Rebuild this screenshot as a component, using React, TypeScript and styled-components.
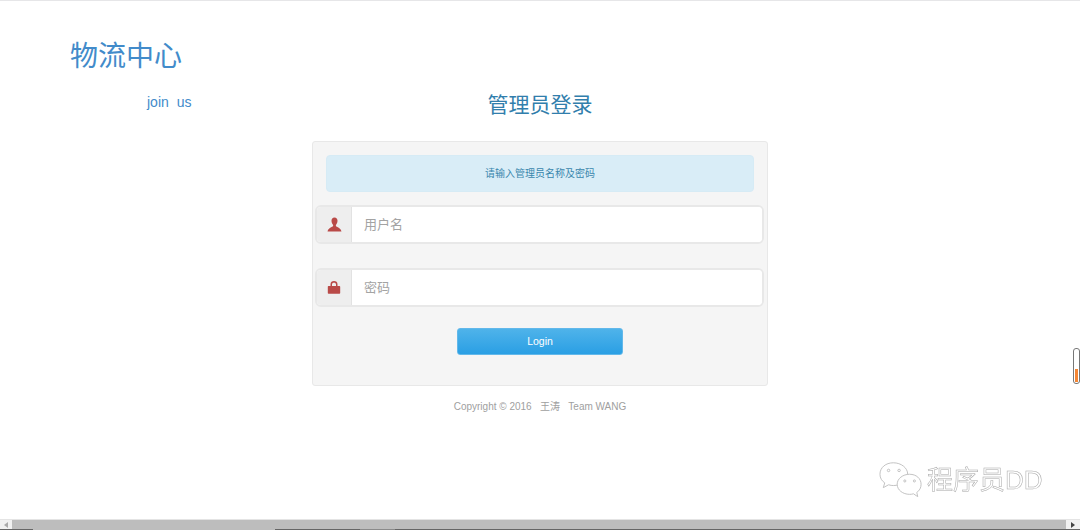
import React from "react";
import styled, { createGlobalStyle } from "styled-components";

const Global = createGlobalStyle`
  html, body { margin: 0; padding: 0; background: #fff; overflow: hidden; }
  body { font-family: "Liberation Sans", "Noto Sans CJK SC", sans-serif; }
  * { box-sizing: border-box; }
`;
const Page = styled.div`
  position: relative;
  width: 1080px;
  height: 530px;
  border-top: 1px solid #e6e6e8;
  overflow: hidden;
  display: flex;
  flex-direction: column;
`;
const Main = styled.main`
  flex: 1;
  display: flex;
  flex-direction: column;
`;
const Brand = styled.h1`
  margin: 38px 0 0 70px;
  font-size: 28px;
  line-height: 36px;
  font-weight: 400;
  color: #428bca;
`;
const TitleRow = styled.div`
  display: grid;
  grid-template-columns: 1fr auto 1fr;
  align-items: center;
  margin-top: 14px;
  height: 32px;
`;
const Join = styled.a`
  padding-left: 147px;
  font-size: 14px;
  color: #428bca;
  word-spacing: 4px;
  margin-top: -6px;
`;
const Title = styled.h2`
  margin: 0;
  font-size: 21px;
  line-height: 32px;
  font-weight: 400;
  color: #317eac;
`;
const Box = styled.form`
  width: 456px;
  height: 245px;
  margin: 20px auto 0;
  padding: 13px;
  background: #f5f5f5;
  border: 1px solid #e8e8e8;
  border-radius: 3px;
  display: flex;
  flex-direction: column;
`;
const Notice = styled.div`
  height: 37px;
  padding-bottom: 2px;
  display: flex;
  align-items: center;
  justify-content: center;
  background: #d9edf7;
  border: 1px solid #d6ebf5;
  border-radius: 4px;
  font-size: 10px;
  color: #3a87ad;
`;
const Field = styled.div<{ $gap: number }>`
  display: flex;
  height: 39px;
  margin: ${(p) => p.$gap}px -10px 0 -11px;
  border: 2px solid #e8e8e8;
  border-radius: 6px;
  background: #fff;
  overflow: hidden;
`;
const Addon = styled.span`
  width: 35px;
  flex: none;
  display: flex;
  align-items: center;
  justify-content: center;
  background: #eeeeee;
  border-right: 1px solid #e2e2e2;
`;
const Input = styled.input`
  flex: 1;
  min-width: 0;
  border: 0;
  outline: 0;
  background: #fff;
  padding: 0 12px;
  font: 13px "Liberation Sans", "Noto Sans CJK SC", sans-serif;
  &::placeholder { color: #a3a3a3; opacity: 1; }
`;
const Button = styled.button`
  display: block;
  width: 166px;
  height: 27px;
  margin: 21px auto 0;
  padding: 0 0 2px;
  border: 1px solid #62b8ea;
  border-radius: 3px;
  background: linear-gradient(#4fb3ea, #2a9fe4);
  color: #fff;
  font: 10.5px "Liberation Sans", sans-serif;
`;
const Footer = styled.p`
  margin: 14px 0 0;
  text-align: center;
  font-size: 10px;
  line-height: 14px;
  color: #a0a0a0;
`;
const Gauge = styled.div`
  position: absolute;
  left: 1073px;
  top: 347px;
  width: 7px;
  height: 36px;
  border: 1px solid #777;
  border-radius: 3px;
  background: #fff;
  display: flex;
  align-items: flex-end;
  justify-content: center;
  padding-bottom: 1px;
  &::after {
    content: "";
    width: 3px;
    height: 13px;
    background: #f58634;
  }
`;
const Watermark = styled.div`
  position: absolute;
  left: 879px;
  top: 460px;
  display: flex;
  align-items: center;
  gap: 4px;
  will-change: opacity;
`;
const MarkText = styled.span`
  font-size: 26px;
  line-height: 32px;
  color: #fff;
  -webkit-text-stroke: 0.5px #a8a8a8;
`;
const Scrollbar = styled.div`
  height: 11px;
  flex: none;
  display: flex;
  flex-direction: column;
  border-top: 1px solid #e4e4e4;
`;
const Track = styled.div`
  flex: 1;
  display: flex;
  background: #bdbdbd;
`;
const Edge = styled.div`
  height: 1px;
  flex: none;
  background: linear-gradient(
    to right,
    #666 0 33px,
    #bdbdbd 33px 275px,
    #666 275px 360px,
    #8a8a8a 360px 395px,
    #666 395px
  );
`;
const Arrow = styled.span<{ $dir: "left" | "right" }>`
  flex: none;
  background: #f1f1f1;
  display: flex;
  align-items: center;
  justify-content: center;
  margin-left: ${(p) => (p.$dir === "right" ? "auto" : "0")};
  width: ${(p) => (p.$dir === "right" ? "14px" : "12px")};
  &::before {
    content: "";
    border: 3px solid transparent;
    ${(p) =>
      p.$dir === "left"
        ? "border-right: 4px solid #aaa; border-left: 0;"
        : "border-left: 4px solid #444; border-right: 0;"}
  }
`;

const UserIcon = () => (
  <svg width="15" height="15" viewBox="0 0 14 14">
    <path
      fill="#b94a48"
      d="M7 0.5C5.2 0.5 4.2 1.8 4.2 3.6c0 1.5.6 3 1.5 3.8v1C5 9.6 1 10 .5 13.5h13C13 10 9 9.6 8.3 8.4v-1c.9-.8 1.5-2.300 1.500-3.800C9.800 1.800 8.800.5 7 .5z"
    />
  </svg>
);
const LockIcon = () => (
  <svg width="14" height="15" viewBox="0 0 14 14">
    <path
      fill="#b94a48"
      d="M1.500 5.500h2V3.800C3.500 1.800 5 .6 7 .6s3.500 1.200 3.500 3.200v1.700h2c.4 0 .7.3.7.7v6.400c0 .4-.3.7-.7.7h-11c-.4 0-.7-.3-.7-.7V6.200c0-.4.3-.7.7-.7zm3.500 0h4V3.900C9 2.800 8.200 2.200 7 2.200s-2 .6-2 1.700z"
    />
  </svg>
);
const WeChatIcon = () => (
  <svg width="44" height="38" viewBox="0 0 46 38" fill="#fff" stroke="#c0c0c0" strokeWidth="1">
    <path d="M15 1C7 1 1 6 1 13c0 4 2 7 5 9l-1.500 5 5.500-3c2 .6 3.500.8 5 .8 8 0 15-5 15-11.800S23 1 15 1z" />
    <path d="M32 13c-7 0-13 4.500-13 10.500S25 34 32 34c1.500 0 3-.2 4-.6l4.500 3-1-4.400c3-2 4.500-5 4.500-8.500C44 17.500 39 13 32 13z" />
    <circle cx="10" cy="9" r="1.300" />
    <circle cx="21" cy="9" r="1.300" />
    <circle cx="27" cy="20" r="1.100" />
    <circle cx="37" cy="20" r="1.100" />
  </svg>
);

export default function App() {
  return (
    <Page>
      <Global />
      <Main>
        <Brand>物流中心</Brand>
        <TitleRow>
          <Join>join us</Join>
          <Title>管理员登录</Title>
          <span />
        </TitleRow>
        <Box onSubmit={(e) => e.preventDefault()}>
          <Notice>请输入管理员名称及密码</Notice>
          <Field $gap={13}>
            <Addon>
              <UserIcon />
            </Addon>
            <Input placeholder="用户名" />
          </Field>
          <Field $gap={24}>
            <Addon>
              <LockIcon />
            </Addon>
            <Input type="password" placeholder="密码" />
          </Field>
          <Button type="submit">Login</Button>
        </Box>
        <Footer>Copyright © 2016 &nbsp;&nbsp;王涛 &nbsp;&nbsp;Team WANG</Footer>
      </Main>
      <Scrollbar>
        <Track>
          <Arrow $dir="left" />
          <Arrow $dir="right" />
        </Track>
        <Edge />
      </Scrollbar>
      <Gauge />
      <Watermark>
        <WeChatIcon />
        <MarkText>程序员DD</MarkText>
      </Watermark>
    </Page>
  );
}
